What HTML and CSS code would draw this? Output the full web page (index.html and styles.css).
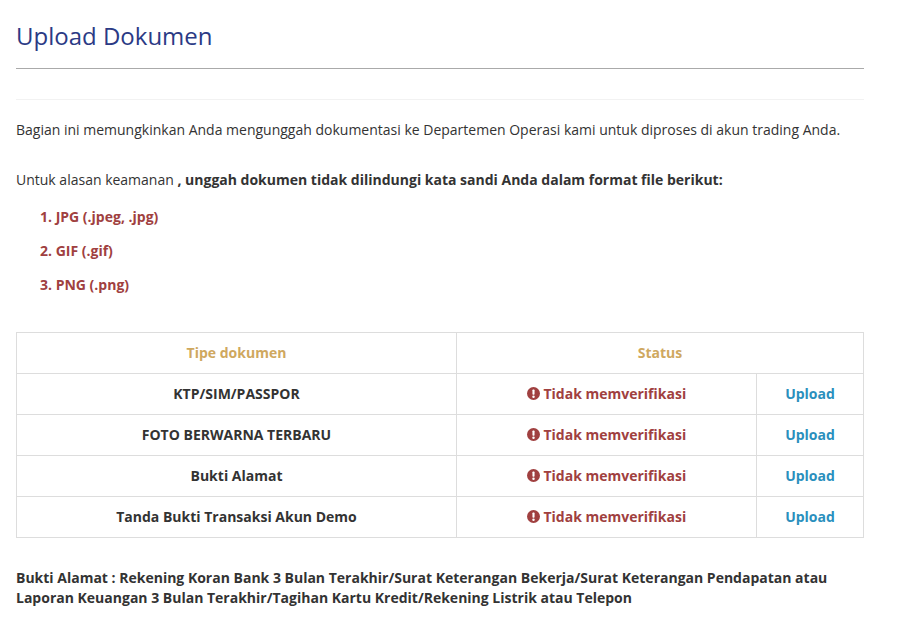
FILE: index.html
```html
<!DOCTYPE html>
<html lang="id">

<head>
    <meta charset="UTF-8">
    <meta name="viewport" content="width=device-width, initial-scale=1.0">
    <title>Upload Dokumen</title>
    <link rel="stylesheet" href="styles.css">
</head>

<body>
    <div class="container">
        <h2 class="page-title">Upload Dokumen</h2>
        <div class="title-line"></div>
        <div class="faint-line"></div>
        <p class="intro">Bagian ini memungkinkan Anda mengunggah dokumentasi ke Departemen Operasi kami untuk diproses di akun trading Anda.</p>
        <p class="notice">Untuk alasan keamanan <b>, unggah dokumen tidak dilindungi kata sandi Anda dalam format file berikut:</b></p>
        <ol class="formats">
            <li>JPG (.jpeg, .jpg)</li>
            <li>GIF (.gif)</li>
            <li>PNG (.png)</li>
        </ol>
        <table class="doc-table">
            <colgroup>
                <col class="col-type">
                <col class="col-status">
                <col class="col-action">
            </colgroup>
            <thead>
                <tr>
                    <th>Tipe dokumen</th>
                    <th colspan="2">Status</th>
                </tr>
            </thead>
            <tbody>
                <tr>
                    <td>KTP/SIM/PASSPOR</td>
                    <td class="status">
                        <svg class="icon" viewBox="0 0 16 16"><circle cx="8" cy="8" r="8" fill="#a04040"/><rect x="6.7" y="3" width="2.6" height="6.4" rx="0.9" fill="#fff"/><circle cx="8" cy="11.9" r="1.5" fill="#fff"/></svg>
                        Tidak memverifikasi
                    </td>
                    <td><a href="#">Upload</a></td>
                </tr>
                <tr>
                    <td>FOTO BERWARNA TERBARU</td>
                    <td class="status">
                        <svg class="icon" viewBox="0 0 16 16"><circle cx="8" cy="8" r="8" fill="#a04040"/><rect x="6.7" y="3" width="2.6" height="6.4" rx="0.9" fill="#fff"/><circle cx="8" cy="11.9" r="1.5" fill="#fff"/></svg>
                        Tidak memverifikasi
                    </td>
                    <td><a href="#">Upload</a></td>
                </tr>
                <tr>
                    <td>Bukti Alamat</td>
                    <td class="status">
                        <svg class="icon" viewBox="0 0 16 16"><circle cx="8" cy="8" r="8" fill="#a04040"/><rect x="6.7" y="3" width="2.6" height="6.4" rx="0.9" fill="#fff"/><circle cx="8" cy="11.9" r="1.5" fill="#fff"/></svg>
                        Tidak memverifikasi
                    </td>
                    <td><a href="#">Upload</a></td>
                </tr>
                <tr>
                    <td>Tanda Bukti Transaksi Akun Demo</td>
                    <td class="status">
                        <svg class="icon" viewBox="0 0 16 16"><circle cx="8" cy="8" r="8" fill="#a04040"/><rect x="6.7" y="3" width="2.6" height="6.4" rx="0.9" fill="#fff"/><circle cx="8" cy="11.9" r="1.5" fill="#fff"/></svg>
                        Tidak memverifikasi
                    </td>
                    <td><a href="#">Upload</a></td>
                </tr>
            </tbody>
        </table>
        <p class="footnote">Bukti Alamat : Rekening Koran Bank 3 Bulan Terakhir/Surat Keterangan Bekerja/Surat Keterangan Pendapatan atau Laporan Keuangan 3 Bulan Terakhir/Tagihan Kartu Kredit/Rekening Listrik atau Telepon</p>
    </div>
</body>

</html>
```

FILE: styles.css
```css
body {
    font-family: 'Open Sans', sans-serif;
    font-size: 14px;
    line-height: 20px;
    color: #333;
    background-color: #ffffff;
    margin: 0;
}

.container {
    width: 848px;
    margin-left: 16px;
}

.page-title {
    font-size: 24px;
    font-weight: 400;
    line-height: 33px;
    color: #2b3a85;
    margin: 19px 0 16px;
}

.title-line {
    height: 1px;
    background-color: #aaa;
}

.faint-line {
    height: 1px;
    background-color: #f2f2f2;
    margin-top: 30px;
}

.intro {
    margin: 20px 0 30px;
}

.notice {
    margin: 0 0 17px;
}

.formats {
    margin: 0 0 37px;
    padding-left: 24px;
    list-style-position: inside;
    color: #a04040;
    font-weight: 700;
}

.formats li {
    height: 20px;
    margin-bottom: 14px;
}

.doc-table {
    width: 847px;
    border-collapse: collapse;
    table-layout: fixed;
}

.doc-table th,
.doc-table td {
    border: 1px solid #ddd;
    height: 40px;
    padding: 0 8px;
    text-align: center;
    font-weight: 700;
}

.doc-table th {
    color: #cfa85f;
}

.col-type {
    width: 440px;
}

.col-status {
    width: 300px;
}

.col-action {
    width: 107px;
}

.doc-table .status {
    color: #a04040;
}

.icon {
    width: 13px;
    height: 13px;
    vertical-align: -1px;
}

.doc-table a {
    color: #2a8fbd;
    text-decoration: none;
}

.footnote {
    font-weight: 700;
    margin: 30px 0 0;
}
```
